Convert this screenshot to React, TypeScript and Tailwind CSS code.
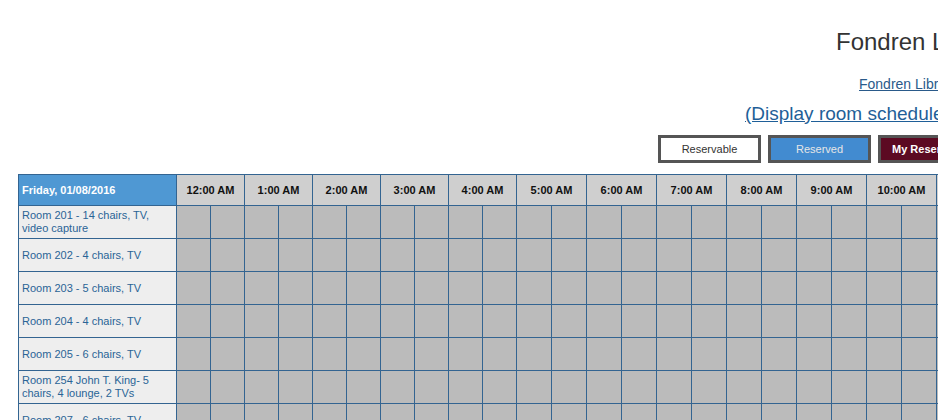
import React from 'react';

const hours = [
  '12:00 AM', '1:00 AM', '2:00 AM', '3:00 AM', '4:00 AM', '5:00 AM', '6:00 AM', '7:00 AM',
  '8:00 AM', '9:00 AM', '10:00 AM', '11:00 AM', '12:00 PM', '1:00 PM', '2:00 PM', '3:00 PM',
  '4:00 PM', '5:00 PM', '6:00 PM', '7:00 PM', '8:00 PM', '9:00 PM', '10:00 PM', '11:00 PM',
];

const rooms = [
  'Room 201 - 14 chairs, TV, video capture',
  'Room 202 - 4 chairs, TV',
  'Room 203 - 5 chairs, TV',
  'Room 204 - 4 chairs, TV',
  'Room 205 - 6 chairs, TV',
  'Room 254 John T. King- 5 chairs, 4 lounge, 2 TVs',
  'Room 207 - 6 chairs, TV',
];

// first column, then 48 half-hour slots (first 10 a bit narrower, like the auto layout)
const gridCols =
  '157px ' +
  Array.from({ length: 48 }, (_, i) => (i < 10 ? '33px' : '34px')).join(' ');

export default function App() {
  return (
    <div
      className="w-[938px] h-[420px] overflow-hidden bg-white text-[#333]"
      style={{ fontFamily: '"Liberation Sans", Arial, sans-serif' }}
    >
      <div className="w-[1900px] flex flex-col">
        {/* Heading */}
        <div className="pl-[836px] mt-[30px] text-[24px] leading-none h-[24px] whitespace-nowrap text-[#333]">
          Fondren Library Room Reservations
        </div>
        <div className="pl-[859px] mt-[23px] text-[14px] leading-none h-[14px] whitespace-nowrap">
          <a href="#" className="underline text-[#2a5a8a]">Fondren Library - Group Study Rooms</a>
        </div>
        <div className="pl-[745px] mt-[13px] text-[19px] leading-none h-[20px] whitespace-nowrap">
          <a href="#" className="underline text-[#1f5f98]">(Display room schedule for the week)</a>
        </div>

        {/* Legend */}
        <div className="pl-[658px] mt-[11px] flex gap-[7px] text-[11px]">
          <div className="w-[103px] h-[28px] border-[3px] border-[#555] bg-white text-[#333] flex items-center justify-center">
            Reservable
          </div>
          <div className="w-[103px] h-[28px] border-[3px] border-[#555] bg-[#428bd0] text-[#e6e6e6] flex items-center justify-center">
            Reserved
          </div>
          <div className="w-[103px] h-[28px] border-[3px] border-[#555] bg-[#5c0a22] text-white font-bold flex items-center pl-[11px] whitespace-nowrap">
            My Reservations
          </div>
        </div>

        {/* Schedule grid */}
        <div className="ml-[18px] mt-[11px] self-start">
          <div
            className="grid gap-px p-px bg-[#336491]"
            style={{ gridTemplateColumns: gridCols, gridAutoRows: '32px', gridTemplateRows: '30px' }}
          >
            <div className="bg-[#4f98d3] text-white font-bold text-[11px] flex items-center pl-[3px]">
              Friday, 01/08/2016
            </div>
            {hours.map((h) => (
              <div
                key={h}
                className="col-span-2 bg-[#cfcfcf] text-[#111] font-bold text-[11px] flex items-center justify-center whitespace-nowrap"
              >
                {h}
              </div>
            ))}
            {rooms.map((r) => (
              <React.Fragment key={r}>
                <div className="bg-[#eeeeee] text-[#2a6496] text-[11px] leading-[13px] flex items-center pl-[3px] pr-[4px]">
                  {r}
                </div>
                {Array.from({ length: 48 }, (_, i) => (
                  <div key={i} className="bg-[#bbbbbb]" />
                ))}
              </React.Fragment>
            ))}
          </div>
        </div>
      </div>
    </div>
  );
}
